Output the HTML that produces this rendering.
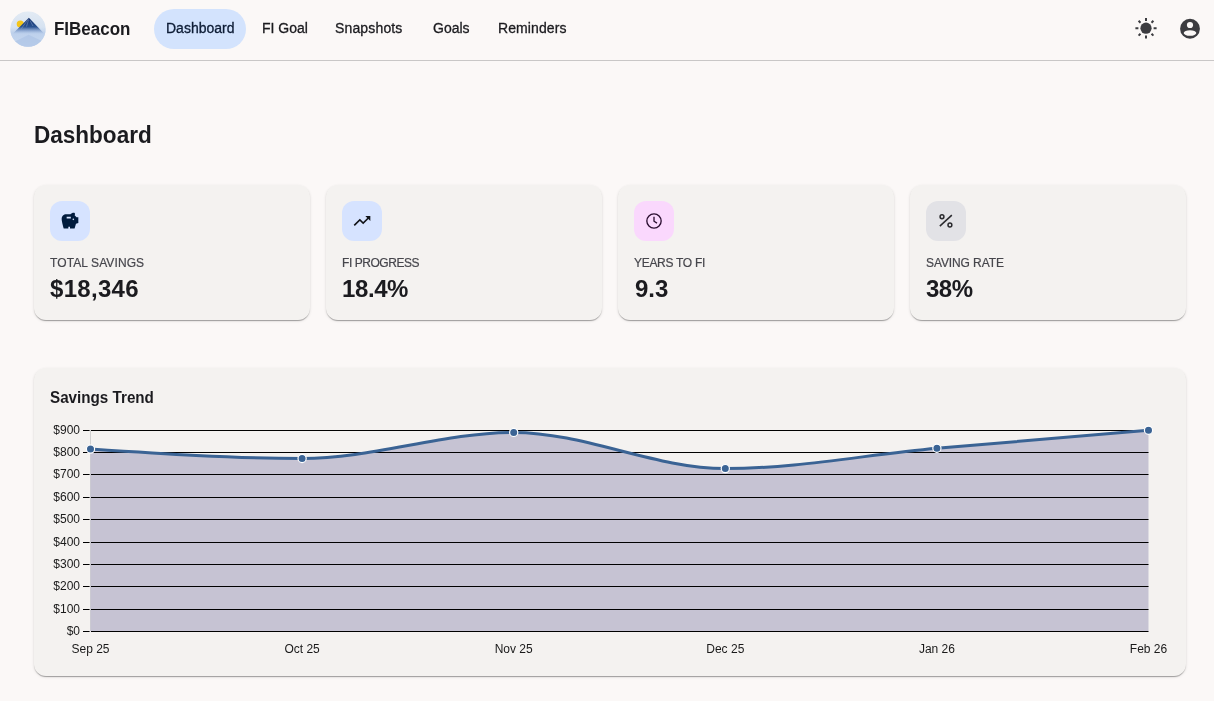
<!DOCTYPE html>
<html><head><meta charset="utf-8">
<style>
*{box-sizing:border-box;margin:0;padding:0}
html,body{width:1214px;height:701px;overflow:hidden;background:#fbf8f7;font-family:"Liberation Sans",sans-serif;color:#1b1b1f}
.hdr{position:absolute;left:0;top:0;width:1214px;height:61px;border-bottom:1px solid #c9c7c7;background:#fbf8f7}
.logo{position:absolute;left:10px;top:11px;width:36px;height:36px}
.brand{position:absolute;left:54px;top:18px;font-size:18px;font-weight:bold;color:#1b1b1f;line-height:22px;transform:scaleX(0.943);transform-origin:0 0}
.nav{position:absolute;top:9px;height:40px;line-height:39px;font-size:14px;color:#1b1b1f;white-space:nowrap;-webkit-text-stroke:0.3px #1b1b1f}
.nav.act{background:#d3e3fd;border-radius:20px;color:#0e1d36;-webkit-text-stroke:0.3px #0e1d36}
.ico{position:absolute}
h1{position:absolute;left:34px;top:120px;font-size:24px;font-weight:bold;line-height:30px;color:#1b1b1f;transform:scaleX(0.939);transform-origin:0 0}
.card{position:absolute;background:#f4f2f0;border-radius:12px;box-shadow:0 2px 1px -1px rgba(0,0,0,.2),0 1px 1px 0 rgba(0,0,0,.14),0 1px 3px 0 rgba(0,0,0,.12)}
.sc{top:185px;width:276px;height:135px}
.ib{position:absolute;left:16px;top:16px;width:40px;height:40px;border-radius:12px}
.ib svg{position:absolute;left:10px;top:10px;width:20px;height:20px}
.lab{position:absolute;left:16px;top:256px;font-size:12px;line-height:14px;color:#46464c;letter-spacing:0.1px;white-space:nowrap;-webkit-text-stroke:0.2px #46464c}
.val{position:absolute;left:16px;font-size:24px;font-weight:bold;line-height:28px;color:#1b1b1f;white-space:nowrap}
</style></head><body><div id="wrap" style="position:absolute;left:0;top:0;width:1214px;height:701px;will-change:transform">
<div class="hdr">
  <svg class="logo" viewBox="0 0 36 36">
    <defs>
      <linearGradient id="lg1" x1="0" y1="0" x2="0" y2="1"><stop offset="0" stop-color="#e3ebf4"/><stop offset=".55" stop-color="#d3e0f0"/><stop offset="1" stop-color="#b3c9e7"/></linearGradient>
      <linearGradient id="lg2" x1="0" y1="0" x2="0" y2="1"><stop offset="0" stop-color="#13306a"/><stop offset=".55" stop-color="#28508e"/><stop offset="1" stop-color="#6a8cc4"/></linearGradient>
      <linearGradient id="lg3" x1="0" y1="0" x2="0" y2="1"><stop offset="0" stop-color="#c2d4ee" stop-opacity="0"/><stop offset=".3" stop-color="#bcd0ec" stop-opacity=".92"/><stop offset="1" stop-color="#c8d9f0"/></linearGradient>
      <clipPath id="cp"><circle cx="18" cy="18" r="17.8"/></clipPath>
    </defs>
    <g clip-path="url(#cp)">
    <circle cx="18" cy="18" r="17.8" fill="url(#lg1)"/>
    <circle cx="10.3" cy="13" r="3.6" fill="#f4c51a"/>
    <path d="M18.9 6.8 L3 22.5 L34 22.5Z" fill="url(#lg2)"/>
    <path d="M18.9 7.5 L14 14 L11.5 17.5 M18.5 9 L16.5 15.5 M20 9.5 L23 15" stroke="#9fb7dc" stroke-width=".5" fill="none" opacity=".8"/>
    <path d="M0 16 L36 16 L36 36 L0 36Z" fill="url(#lg3)"/>
    <path d="M2 32 L18.6 23.8 L34 31 L34 36 L2 36Z" fill="#aac2e5" opacity=".6"/>
    </g>
  </svg>
  <div class="brand">FIBeacon</div>
  <div class="nav act" style="left:154px;width:92px;padding-left:12px">Dashboard</div>
  <div class="nav" style="left:250px;padding-left:12px">FI Goal</div>
  <div class="nav" style="left:323px;padding-left:12px;letter-spacing:0.15px">Snapshots</div>
  <div class="nav" style="left:421px;padding-left:12px">Goals</div>
  <div class="nav" style="left:486px;padding-left:12px;letter-spacing:0.1px">Reminders</div>
  <svg class="ico" style="left:1134px;top:16px" width="24" height="24" viewBox="0 0 24 24" fill="#3c3c40"><circle cx="12" cy="12.2" r="5.6"/><g stroke="#3c3c40" stroke-width="2" stroke-linecap="butt"><path d="M12 2v3M12 19.4v3M1.4 12.2h3M19.6 12.2h3"/><path d="M4.6 4.8l1.9 1.9M17.5 17.7l1.9 1.9M19.4 4.8l-1.9 1.9M6.5 17.7l-1.9 1.9"/></g></svg>
  <svg class="ico" style="left:1178px;top:16px" width="24" height="24" viewBox="0 0 24 24"><circle cx="12" cy="12.75" r="9.9" fill="#3c3c40"/><circle cx="12" cy="9" r="3.1" fill="#fbf8f7"/><ellipse cx="12" cy="17" rx="6.3" ry="2.85" fill="#fbf8f7"/></svg>
</div>

<h1>Dashboard</h1>

<!-- stat cards -->
<div class="card sc" style="left:34px">
  <div class="ib" style="background:#d6e3ff"><svg viewBox="0 0 24 24" fill="#001b3d"><path d="M19.83 7.5l-2.27-2.27c.07-.42.18-.81.32-1.15.08-.18.12-.37.12-.58 0-.83-.67-1.5-1.5-1.5-1.64 0-3.09.79-4 2h-5C4.46 4 2 6.46 2 9.5S4.5 21 4.5 21H10v-2h2v2h5.5l1.68-5.59 2.82-.94V7.5h-2.17zM13 9H8V7h5v2zm3 2c-.55 0-1-.45-1-1s.45-1 1-1 1 .45 1 1-.45 1-1 1z"/></svg></div>
</div>
<div class="card sc" style="left:326px">
  <div class="ib" style="background:#d6e3ff"><svg viewBox="0 0 24 24" fill="#111318"><path d="M16 6l2.29 2.29-4.88 4.88-4-4L2 16.59 3.41 18l6-6 4 4 6.3-6.29L22 12V6z"/></svg></div>
</div>
<div class="card sc" style="left:618px">
  <div class="ib" style="background:#fad8fd"><svg viewBox="0 0 24 24" fill="none" stroke="#2a0e30" stroke-width="1.6"><circle cx="12" cy="12" r="8.6"/><path d="M12 7v5.3l3.6 2.3"/></svg></div>
</div>
<div class="card sc" style="left:910px">
  <div class="ib" style="background:#e2e2e6"><svg viewBox="0 0 24 24" fill="none" stroke="#2b2b2f" stroke-width="1.8"><circle cx="7.2" cy="6.9" r="2.3"/><circle cx="16.7" cy="16.75" r="2.3"/><path d="M4.6 18.2L19 5"/></svg></div>
</div>
<div class="lab" style="left:50px">TOTAL SAVINGS</div>
<div class="lab" style="left:342px;letter-spacing:-0.45px">FI PROGRESS</div>
<div class="lab" style="left:634px;letter-spacing:-0.3px">YEARS TO FI</div>
<div class="lab" style="left:926px;letter-spacing:-0.1px">SAVING RATE</div>
<div class="val" style="left:50px;top:275px;letter-spacing:0.3px">$18,346</div>
<div class="val" style="left:342px;top:275px;letter-spacing:-0.4px">18.4%</div>
<div class="val" style="left:635px;top:275px">9.3</div>
<div class="val" style="left:926px;top:275px;letter-spacing:-0.5px">38%</div>

<!-- chart card -->
<div class="card" style="left:34px;top:368px;width:1152px;height:308px"></div>
<div style="position:absolute;left:50px;top:388px;font-size:16px;font-weight:bold;line-height:20px;transform:scaleX(0.95);transform-origin:0 0;color:#1b1b1f">Savings Trend</div>
<svg style="position:absolute;left:0;top:0" width="1214" height="701" id="chart" font-family="Liberation Sans, sans-serif">
<!--CHART-->
<line x1="90.5" y1="430" x2="90.5" y2="631" stroke="#d0d0d0" stroke-width="1"/>
<path d="M90.50,449.10C161.03,453.80,231.57,458.50,302.10,458.50C372.63,458.50,443.17,432.40,513.70,432.40C584.23,432.40,654.77,468.60,725.30,468.60C795.83,468.60,866.37,454.68,936.90,448.30C1007.43,441.92,1077.97,436.11,1148.50,430.30L1148.50,631.50L90.50,631.50Z" fill="#c6c3d3"/>
<line x1="83" y1="631.50" x2="89.6" y2="631.50" stroke="#000" stroke-width="1"/>
<line x1="91" y1="631.50" x2="1148.5" y2="631.50" stroke="#000" stroke-width="1"/>
<text x="80" y="631.50" text-anchor="end" dy="0.30em" font-size="12" fill="#1a1a1a">$0</text>
<line x1="83" y1="609.50" x2="89.6" y2="609.50" stroke="#000" stroke-width="1"/>
<line x1="91" y1="609.50" x2="1148.5" y2="609.50" stroke="#000" stroke-width="1"/>
<text x="80" y="609.50" text-anchor="end" dy="0.30em" font-size="12" fill="#1a1a1a">$100</text>
<line x1="83" y1="586.50" x2="89.6" y2="586.50" stroke="#000" stroke-width="1"/>
<line x1="91" y1="586.50" x2="1148.5" y2="586.50" stroke="#000" stroke-width="1"/>
<text x="80" y="586.50" text-anchor="end" dy="0.30em" font-size="12" fill="#1a1a1a">$200</text>
<line x1="83" y1="564.50" x2="89.6" y2="564.50" stroke="#000" stroke-width="1"/>
<line x1="91" y1="564.50" x2="1148.5" y2="564.50" stroke="#000" stroke-width="1"/>
<text x="80" y="564.50" text-anchor="end" dy="0.30em" font-size="12" fill="#1a1a1a">$300</text>
<line x1="83" y1="542.50" x2="89.6" y2="542.50" stroke="#000" stroke-width="1"/>
<line x1="91" y1="542.50" x2="1148.5" y2="542.50" stroke="#000" stroke-width="1"/>
<text x="80" y="542.50" text-anchor="end" dy="0.30em" font-size="12" fill="#1a1a1a">$400</text>
<line x1="83" y1="519.50" x2="89.6" y2="519.50" stroke="#000" stroke-width="1"/>
<line x1="91" y1="519.50" x2="1148.5" y2="519.50" stroke="#000" stroke-width="1"/>
<text x="80" y="519.50" text-anchor="end" dy="0.30em" font-size="12" fill="#1a1a1a">$500</text>
<line x1="83" y1="497.50" x2="89.6" y2="497.50" stroke="#000" stroke-width="1"/>
<line x1="91" y1="497.50" x2="1148.5" y2="497.50" stroke="#000" stroke-width="1"/>
<text x="80" y="497.50" text-anchor="end" dy="0.30em" font-size="12" fill="#1a1a1a">$600</text>
<line x1="83" y1="474.50" x2="89.6" y2="474.50" stroke="#000" stroke-width="1"/>
<line x1="91" y1="474.50" x2="1148.5" y2="474.50" stroke="#000" stroke-width="1"/>
<text x="80" y="474.50" text-anchor="end" dy="0.30em" font-size="12" fill="#1a1a1a">$700</text>
<line x1="83" y1="452.50" x2="89.6" y2="452.50" stroke="#000" stroke-width="1"/>
<line x1="91" y1="452.50" x2="1148.5" y2="452.50" stroke="#000" stroke-width="1"/>
<text x="80" y="452.50" text-anchor="end" dy="0.30em" font-size="12" fill="#1a1a1a">$800</text>
<line x1="83" y1="430.50" x2="89.6" y2="430.50" stroke="#000" stroke-width="1"/>
<line x1="91" y1="430.50" x2="1148.5" y2="430.50" stroke="#000" stroke-width="1"/>
<text x="80" y="430.50" text-anchor="end" dy="0.30em" font-size="12" fill="#1a1a1a">$900</text>
<text x="90.50" y="653" text-anchor="middle" font-size="12" fill="#1a1a1a">Sep 25</text>
<text x="302.10" y="653" text-anchor="middle" font-size="12" fill="#1a1a1a">Oct 25</text>
<text x="513.70" y="653" text-anchor="middle" font-size="12" fill="#1a1a1a">Nov 25</text>
<text x="725.30" y="653" text-anchor="middle" font-size="12" fill="#1a1a1a">Dec 25</text>
<text x="936.90" y="653" text-anchor="middle" font-size="12" fill="#1a1a1a">Jan 26</text>
<text x="1148.50" y="653" text-anchor="middle" font-size="12" fill="#1a1a1a">Feb 26</text>
<path d="M90.50,449.10C161.03,453.80,231.57,458.50,302.10,458.50C372.63,458.50,443.17,432.40,513.70,432.40C584.23,432.40,654.77,468.60,725.30,468.60C795.83,468.60,866.37,454.68,936.90,448.30C1007.43,441.92,1077.97,436.11,1148.50,430.30" fill="none" stroke="#3a6394" stroke-width="3"/>
<circle cx="90.50" cy="449.10" r="4.1" fill="#3a6394" stroke="#fff" stroke-width="1.2"/>
<circle cx="302.10" cy="458.50" r="4.1" fill="#3a6394" stroke="#fff" stroke-width="1.2"/>
<circle cx="513.70" cy="432.40" r="4.1" fill="#3a6394" stroke="#fff" stroke-width="1.2"/>
<circle cx="725.30" cy="468.60" r="4.1" fill="#3a6394" stroke="#fff" stroke-width="1.2"/>
<circle cx="936.90" cy="448.30" r="4.1" fill="#3a6394" stroke="#fff" stroke-width="1.2"/>
<circle cx="1148.50" cy="430.30" r="4.1" fill="#3a6394" stroke="#fff" stroke-width="1.2"/>
<!--/CHART-->
</svg>
</div></body></html>
